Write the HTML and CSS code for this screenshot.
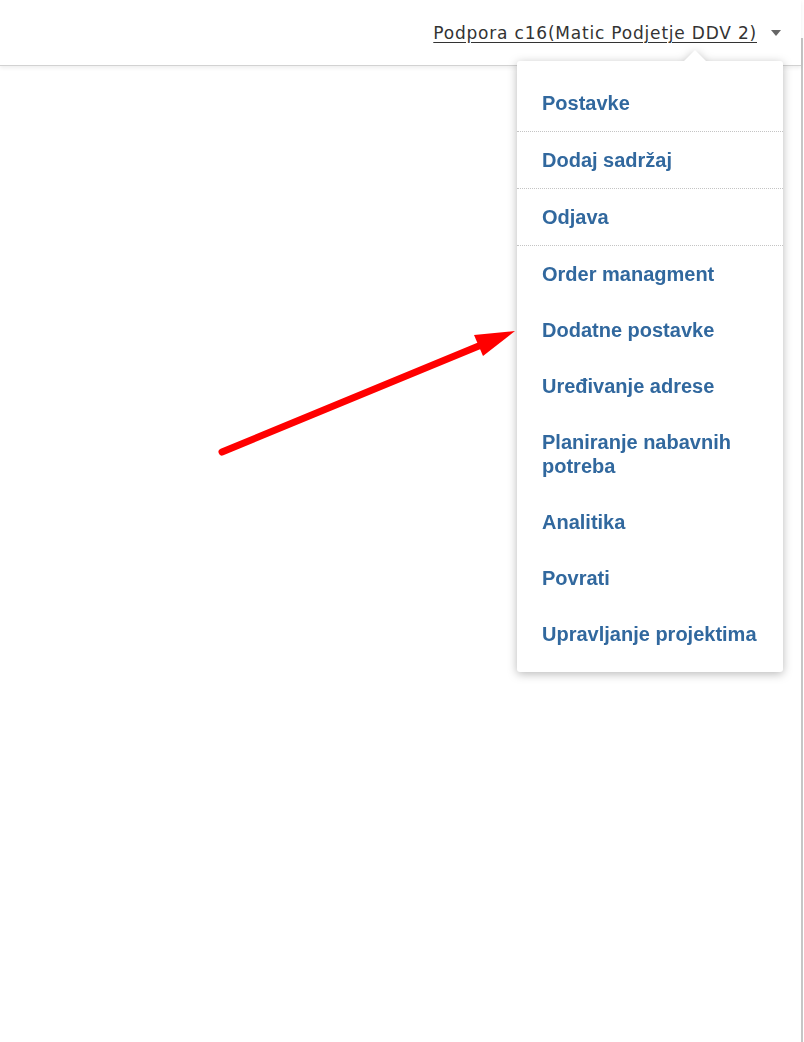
FILE: index.html
```html
<!DOCTYPE html>
<html>
	<head>
		<meta charset="utf-8">
		<meta name="viewport" content="width=device-width, initial-scale=1.0">
		<link rel="stylesheet" href="styles.css">
	</head>
	<body>
		<div class="page">
			<header class="topbar">
				<nav class="usernav">
					<a class="username" href="#">Podpora c16(Matic Podjetje DDV 2)</a>
					<span class="caret"></span>
				</nav>
			</header>
			<main class="content"></main>

			<!-- dropdown menu for user -->
			<ul class="dropdown">
				<li class="item sep"><a href="#">Postavke</a></li>
				<li class="item sep"><a href="#">Dodaj sadržaj</a></li>
				<li class="item sep"><a href="#">Odjava</a></li>
				<li class="item"><a href="#">Order managment</a></li>
				<li class="item"><a href="#">Dodatne postavke</a></li>
				<li class="item"><a href="#">Uređivanje adrese</a></li>
				<li class="item"><a href="#">Planiranje nabavnih potreba</a></li>
				<li class="item"><a href="#">Analitika</a></li>
				<li class="item"><a href="#">Povrati</a></li>
				<li class="item"><a href="#">Upravljanje projektima</a></li>
			</ul>

			<!-- red annotation arrow -->
			<svg class="pointer" width="804" height="1042" viewBox="0 0 804 1042">
				<line x1="222" y1="452" x2="486" y2="343" stroke="#ff0000" stroke-width="7" stroke-linecap="round"/>
				<polygon points="515,331 474,335 483,356" fill="#ff0000"/>
			</svg>
		</div>
		<div class="scroll">
			<div class="thumb"></div>
		</div>
	</body>
</html>
```

FILE: styles.css
```css
* {
	margin:0;
	padding:0;
	box-sizing: border-box;
}
html, body {
	height:100%;
	background-color: #ffffff;
}
body {
	display:flex;
	overflow:hidden;
}
.page {
	flex:none;
	width:801px;
	position:relative;
}
.topbar {
	height:66px;
	border-bottom:1px solid #d2d2d2;
	box-shadow: 0 2px 4px rgba(0,0,0,0.07);
	display:flex;
	justify-content:flex-end;
}
.usernav {
	display:flex;
	align-items:center;
	padding:0 20px 0 0;
	height:65px;
}
.username {
	font-family: "DejaVu Sans", Verdana, sans-serif;
	font-size:17px;
	letter-spacing:0.8px;
	color:#333333;
	text-decoration: underline;
	text-underline-offset: 3px;
	margin-top:1px;
}
.caret {
	width:0;
	height:0;
	margin-left:14px;
	border-left:5.5px solid transparent;
	border-right:5.5px solid transparent;
	border-top:6px solid #666666;
}
.dropdown {
	list-style:none;
	position:absolute;
	left:517px;
	top:61px;
	width:266px;
	background-color:#ffffff;
	border-radius:3px;
	padding:14px 0 10px 0;
	filter: drop-shadow(0 2px 5px rgba(0,0,0,0.28));
}
.dropdown::before {
	content:"";
	position:absolute;
	left:167px;
	top:-11px;
	border-left:11px solid transparent;
	border-right:11px solid transparent;
	border-bottom:11px solid #ffffff;
}
.dropdown .item {
	padding:16px 20px 16px 25px;
	font-family: "Liberation Sans", Arial, sans-serif;
	font-weight:bold;
	font-size:20px;
	line-height:24px;
}
.dropdown .item.sep {
	border-bottom:1px dotted #c4c4c4;
}
.dropdown .item a {
	color:#31689e;
	text-decoration:none;
}
.pointer {
	position:absolute;
	left:0;
	top:0;
	pointer-events:none;
}
.scroll {
	flex:none;
	width:3px;
	padding-top:38px;
}
.scroll .thumb {
	width:2px;
	height:100%;
	background-color:#c6c6c6;
}
```
